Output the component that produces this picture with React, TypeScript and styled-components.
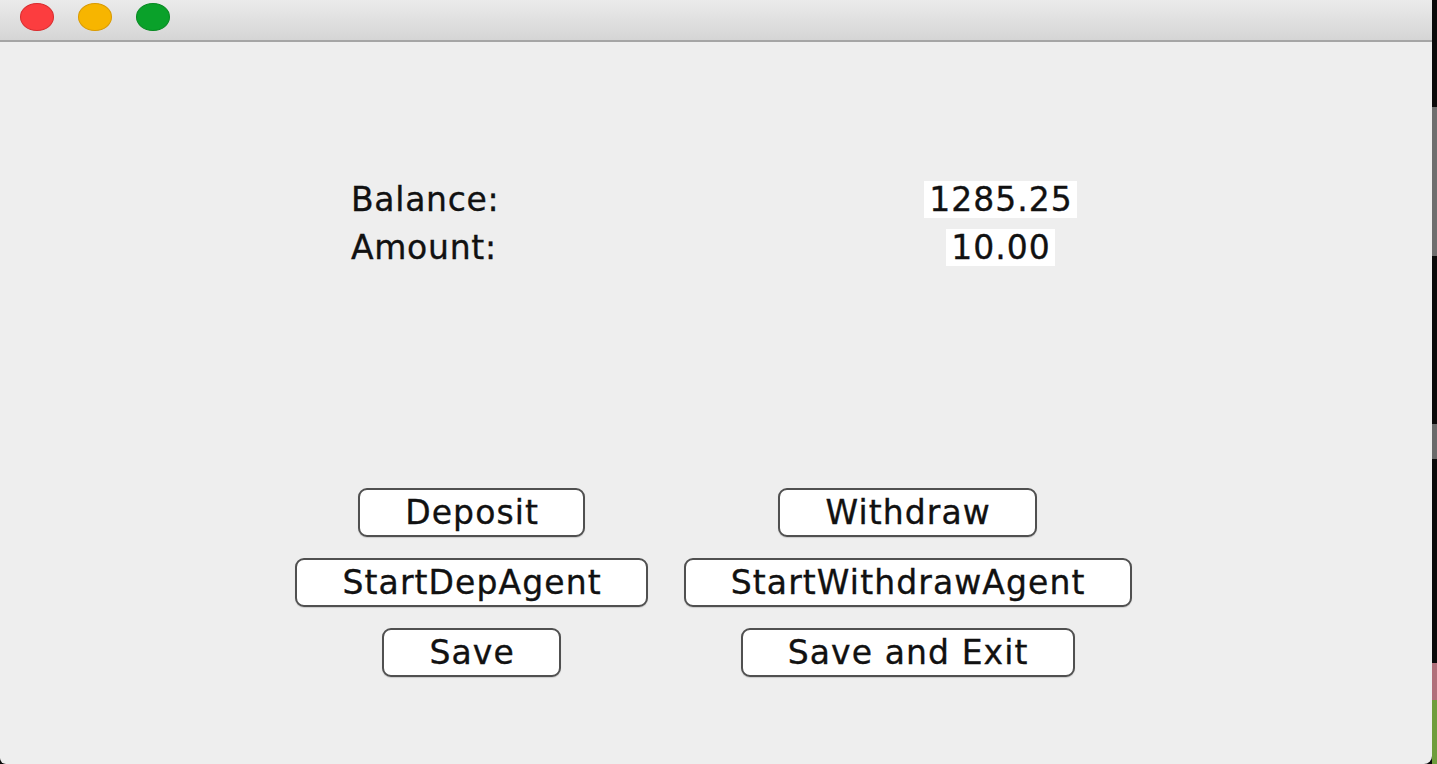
import React from "react";
import styled, { createGlobalStyle } from "styled-components";

const GlobalStyle = createGlobalStyle`
  html, body {
    margin: 0;
    padding: 0;
    background: #0a0a0a;
    overflow: hidden;
  }
  * { box-sizing: border-box; }
`;

const Desktop = styled.div`
  display: flex;
  width: 1437px;
  height: 764px;
  background: #0a0a0a;
`;

const Window = styled.div`
  width: 1432px;
  height: 764px;
  display: flex;
  flex-direction: column;
  background: #eeeeee;
  border-bottom-right-radius: 8px;
  border-bottom-left-radius: 6px;
  overflow: hidden;
  font-family: "DejaVu Sans", "Verdana", sans-serif;
  color: #111;
  -webkit-text-stroke: 0.35px #111;
`;

const TitleBar = styled.div`
  height: 42px;
  flex: none;
  display: flex;
  align-items: flex-start;
  gap: 24px;
  padding: 3px 0 0 20px;
  background: linear-gradient(#ebebeb, #d5d5d5);
  border-bottom: 2px solid #a5a5a5;
`;

const Light = styled.span<{ $fill: string; $edge: string }>`
  width: 34px;
  height: 28px;
  border-radius: 50%;
  background: ${(p) => p.$fill};
  border: 1px solid ${(p) => p.$edge};
`;

const Content = styled.div`
  flex: 1;
  display: flex;
  flex-direction: column;
  padding-top: 139px;
`;

const InfoGrid = styled.div`
  display: grid;
  grid-template-columns: 433px 433px;
  grid-auto-rows: 37px;
  row-gap: 11px;
  margin-left: 351px;
`;

const Label = styled.div`
  font-size: 33px;
  line-height: 37px;
  letter-spacing: 0.7px;
`;

const Value = styled.div`
  justify-self: center;
  background: #ffffff;
  font-size: 33px;
  line-height: 37px;
  letter-spacing: 1px;
  padding: 0 4px 0 5px;
`;

const ButtonGrid = styled.div`
  margin-top: 222px;
  display: grid;
  grid-template-columns: auto auto;
  grid-auto-rows: 49px;
  justify-content: center;
  justify-items: center;
  column-gap: 36px;
  row-gap: 21px;
  padding-right: 5px;
`;

const Button = styled.button`
  height: 49px;
  padding: 0 44px 0 45px;
  background: #ffffff;
  border: 2px solid #505050;
  border-radius: 9px;
  font-family: "DejaVu Sans", "Verdana", sans-serif;
  font-size: 33px;
  letter-spacing: 1.1px;
  color: #111;
  -webkit-text-stroke: 0.35px #111;
  line-height: 1;
  box-shadow: 0 1px 1px rgba(0, 0, 0, 0.15);
`;

const Strip = styled.div`
  width: 5px;
  height: 764px;
  display: flex;
  flex-direction: column;
`;

const Segment = styled.div<{ $h: number; $c: string }>`
  flex: none;
  height: ${(p) => p.$h}px;
  background: ${(p) => p.$c};
`;

const segments = [
  { h: 107, c: "#0a0a0a" },
  { h: 149, c: "#6e6e6e" },
  { h: 168, c: "#0a0a0a" },
  { h: 35, c: "#6a6a6a" },
  { h: 204, c: "#0a0a0a" },
  { h: 37, c: "#b0707a" },
  { h: 64, c: "#6f9d3c" },
];

export default function App() {
  return (
    <>
      <GlobalStyle />
      <Desktop>
        <Window>
          <TitleBar>
            <Light $fill="#fc3d3f" $edge="#d92c2e" />
            <Light $fill="#f7b500" $edge="#d99a00" />
            <Light $fill="#0aa12a" $edge="#078a22" />
          </TitleBar>
          <Content>
            <InfoGrid>
              <Label>Balance:</Label>
              <Value>1285.25</Value>
              <Label>Amount:</Label>
              <Value>10.00</Value>
            </InfoGrid>
            <ButtonGrid>
              <Button>Deposit</Button>
              <Button>Withdraw</Button>
              <Button>StartDepAgent</Button>
              <Button>StartWithdrawAgent</Button>
              <Button>Save</Button>
              <Button>Save and Exit</Button>
            </ButtonGrid>
          </Content>
        </Window>
        <Strip>
          {segments.map((s, i) => (
            <Segment key={i} $h={s.h} $c={s.c} />
          ))}
        </Strip>
      </Desktop>
    </>
  );
}
